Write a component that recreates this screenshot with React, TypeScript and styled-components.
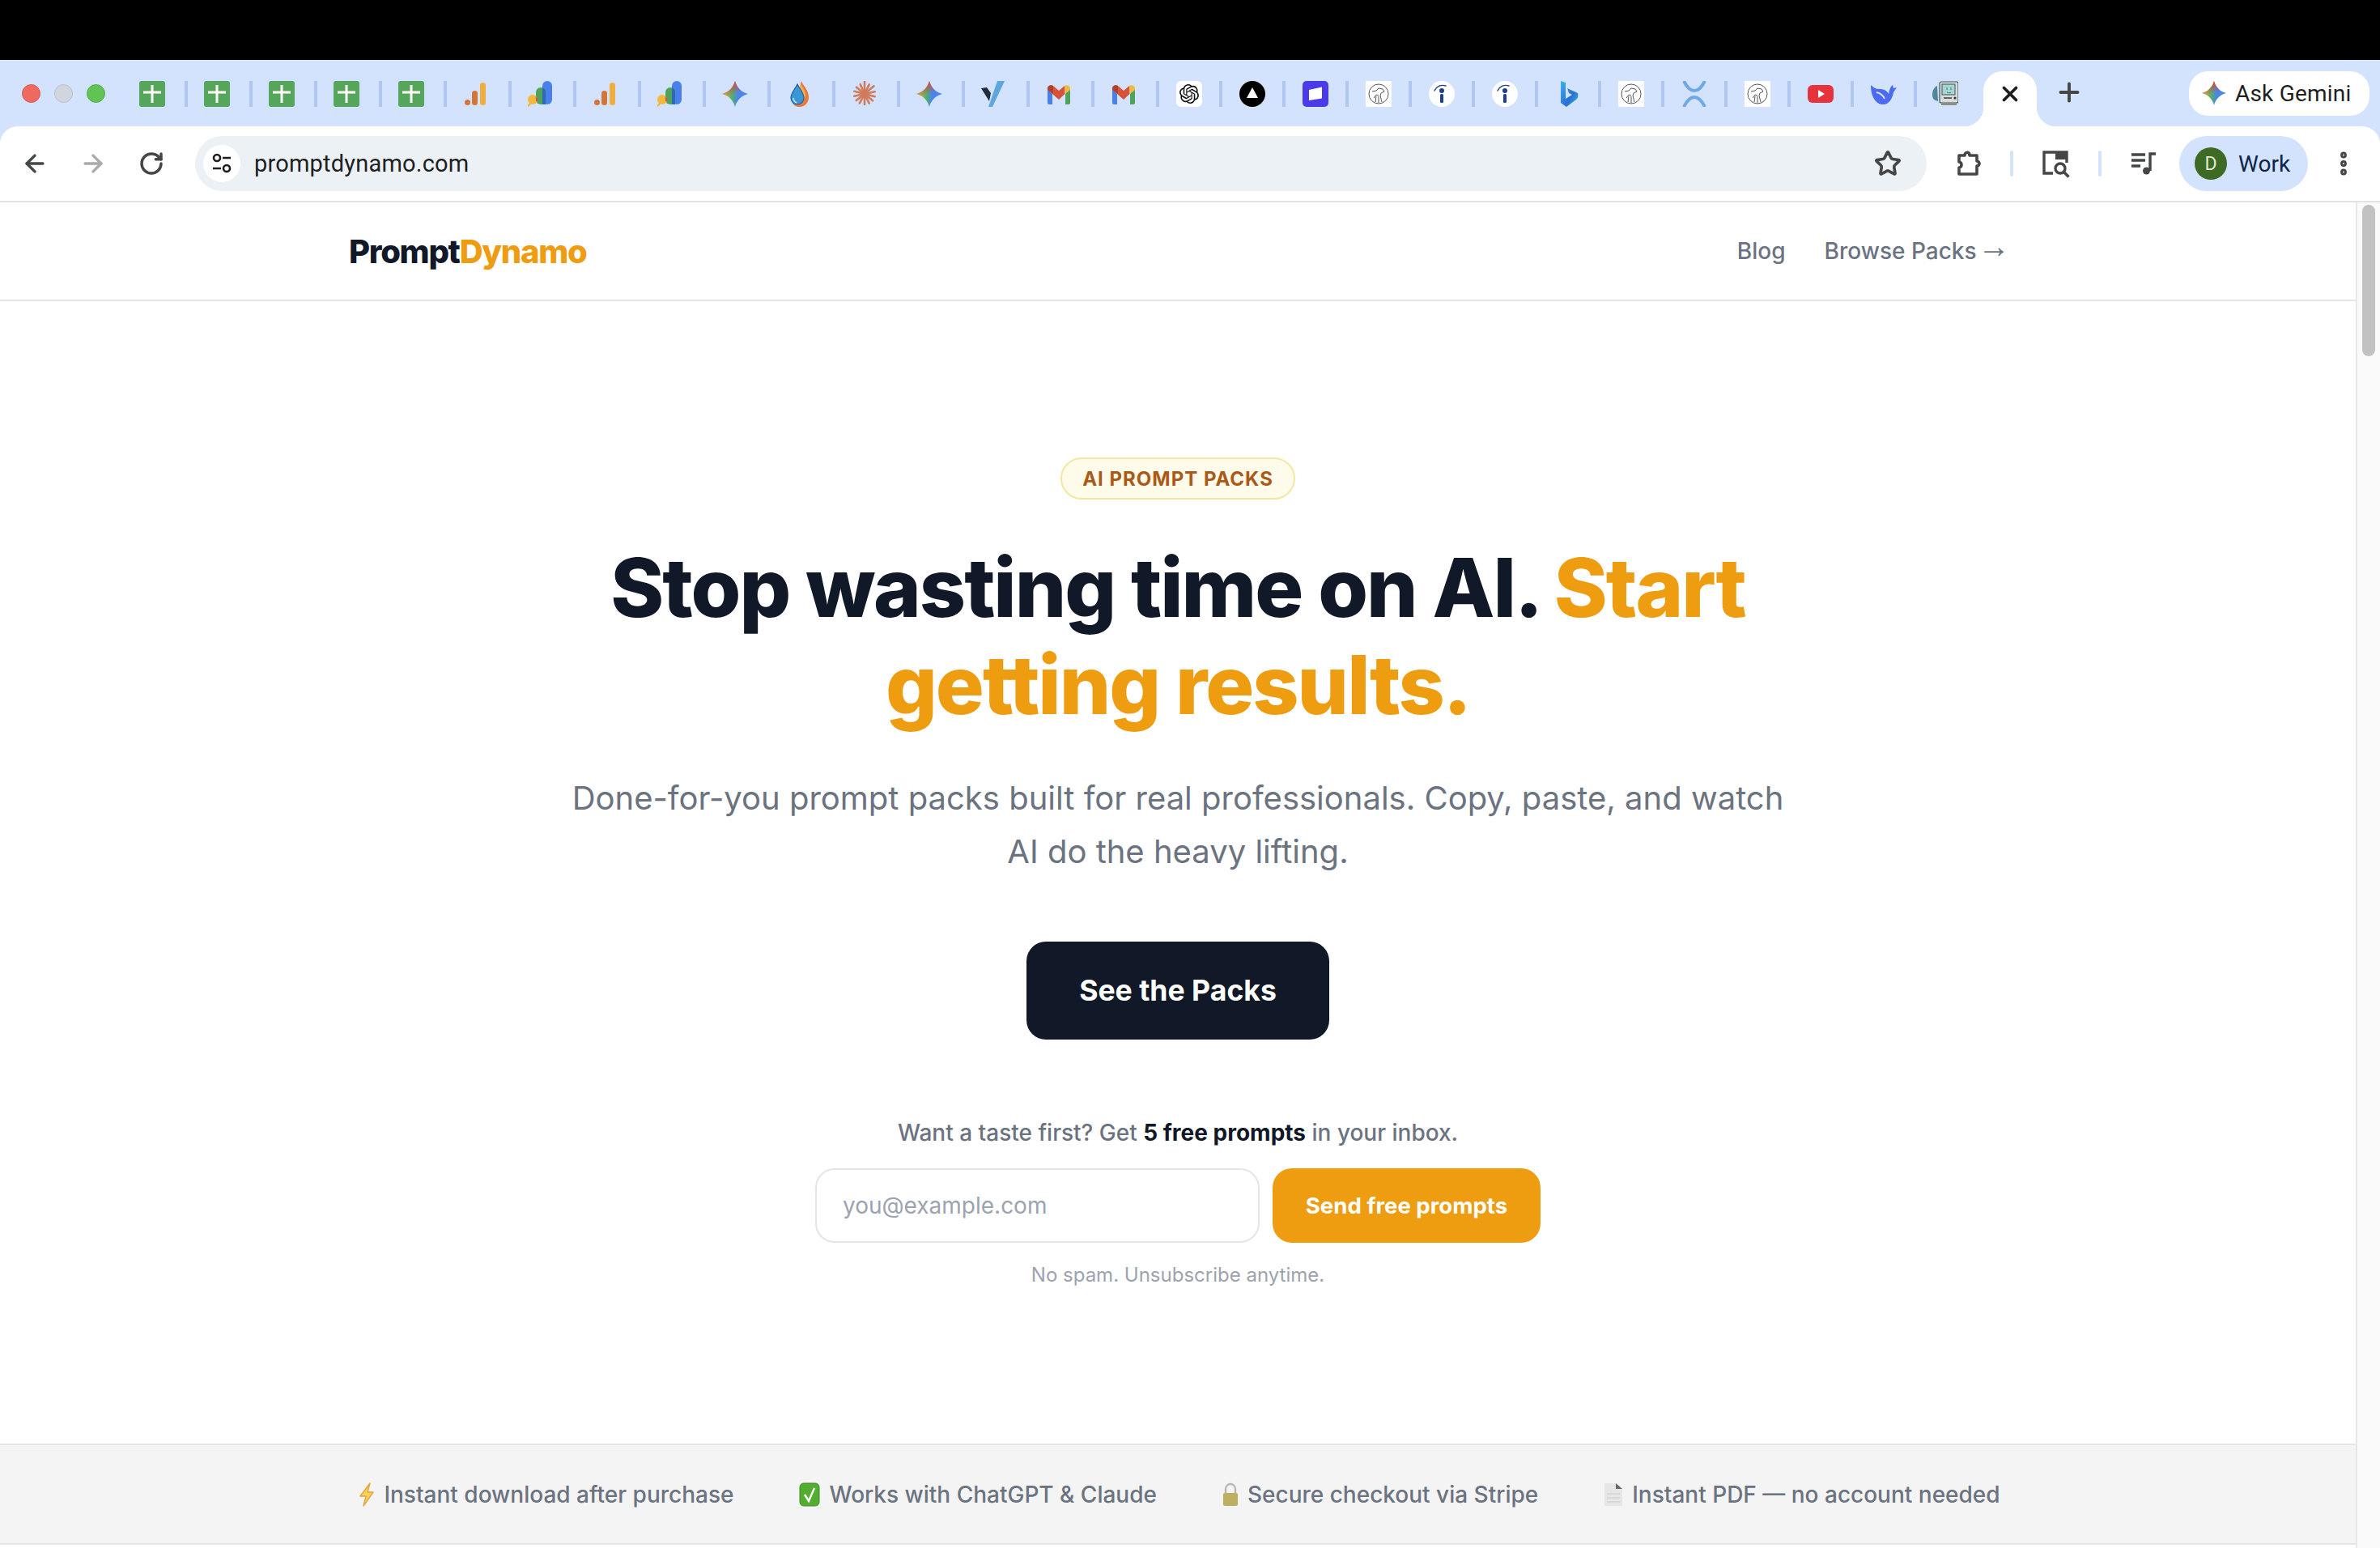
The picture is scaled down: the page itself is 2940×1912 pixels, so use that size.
import React from 'react';
import styled, { createGlobalStyle } from 'styled-components';
import { ArrowLeft, ArrowRight, RotateCw, Star, EllipsisVertical, X, Plus } from 'lucide-react';
import { SiOpenai } from 'react-icons/si';

const GlobalStyle = createGlobalStyle`
  html, body {
    margin: 0;
    padding: 0;
    background: #fff;
    overflow: hidden;
    font-family: Inter, "Liberation Sans", sans-serif;
  }
  * { box-sizing: border-box; }
`;

const Screen = styled.div`
  width: 2940px;
  height: 1912px;
  display: flex;
  flex-direction: column;
  overflow: hidden;
`;

const BlackBar = styled.div`
  height: 74px;
  background: #000;
  flex: none;
`;

const Chrome = styled.div`
  background: #d3e3fd;
  flex: none;
`;

const TabStrip = styled.div`
  height: 82px;
  display: flex;
  align-items: center;
  position: relative;
`;

const Lights = styled.div`
  width: 152px;
  flex: none;
  display: flex;
  gap: 17px;
  padding-left: 27px;
`;

const Light = styled.span<{ $c: string; $b: string }>`
  width: 23px;
  height: 23px;
  border-radius: 50%;
  background: ${(p) => p.$c};
  border: 1px solid ${(p) => p.$b};
`;

const Tab = styled.div<{ $w: number; $pad?: number; $last?: boolean }>`
  width: ${(p) => p.$w}px;
  height: 32px;
  flex: none;
  display: flex;
  justify-content: center;
  padding-right: ${(p) => p.$pad ?? 0}px;
  margin-top: 2px;
  border-right: ${(p) => (p.$last ? 'none' : '4px solid #afc6f1')};
  svg { display: block; width: 32px; height: 32px; }
`;

const ActiveTab = styled.div`
  width: 66px;
  height: 68px;
  flex: none;
  align-self: flex-end;
  background: #fff;
  border-radius: 24px 24px 0 0;
  position: relative;
  display: flex;
  align-items: flex-start;
  justify-content: center;
  padding-top: 13px;
  color: #1f1f1f;

  &::before, &::after {
    content: '';
    position: absolute;
    bottom: 0;
    width: 24px;
    height: 24px;
  }
  &::before {
    left: -24px;
    background: radial-gradient(circle at 0 0, transparent 24px, #fff 24.5px);
  }
  &::after {
    right: -24px;
    background: radial-gradient(circle at 100% 0, transparent 24px, #fff 24.5px);
  }
`;

const NewTab = styled.div`
  width: 80px;
  margin-top: -2px;
  display: flex;
  justify-content: center;
  color: #444746;
`;

const AskGemini = styled.div`
  margin-left: auto;
  margin-right: 13px;
  width: 223px;
  height: 55px;
  border-radius: 24px;
  background: #fff;
  display: flex;
  align-items: center;
  gap: 11px;
  padding-left: 16px;
  font-size: 28px;
  font-weight: 400;
  color: #1f1f1f;
  font-family: Roboto, Inter, sans-serif;
  letter-spacing: 0.2px;
  svg { width: 30px; height: 30px; flex: none; }
`;

const Toolbar = styled.div`
  height: 94px;
  background: #fff;
  border-radius: 22px 22px 0 0;
  border-bottom: 2px solid #e2e2e2;
  display: flex;
  align-items: center;
  padding: 0 0 0 7px;
`;

const ToolSlot = styled.div<{ $ml?: number; $faded?: boolean }>`
  width: 72px;
  flex: none;
  margin-left: ${(p) => p.$ml ?? 0}px;
  display: flex;
  justify-content: center;
  align-items: center;
  color: ${(p) => (p.$faded ? '#a9abad' : '#444746')};
`;

const Omnibox = styled.div`
  width: 2139px;
  height: 68px;
  flex: none;
  margin-left: 18px;
  background: #ecf1f6;
  border-radius: 34px;
  display: flex;
  align-items: center;
  padding: 0 31px 0 10px;
`;

const SiteButton = styled.div`
  width: 46px;
  height: 46px;
  border-radius: 50%;
  background: #fff;
  display: flex;
  align-items: center;
  justify-content: center;
  margin-right: 17px;
  flex: none;
`;

const Url = styled.span`
  font-family: Roboto, Inter, sans-serif;
  font-size: 29px;
  color: #1f1f1f;
  letter-spacing: 0.2px;
  flex: 1;
`;

const ToolSep = styled.span`
  width: 4px;
  height: 32px;
  flex: none;
  margin-left: 16px;
  background: #d3e3fd;
  border-radius: 2px;
`;

const ProfilePill = styled.div`
  width: 159px;
  height: 68px;
  flex: none;
  margin-left: 8px;
  border-radius: 34px;
  background: #d3e3fd;
  display: flex;
  align-items: center;
  padding-left: 19px;
  gap: 14px;
`;

const Avatar = styled.span`
  width: 40px;
  height: 40px;
  border-radius: 50%;
  background: #3d6b24;
  color: #dfe9d5;
  font-family: Roboto, sans-serif;
  font-size: 23px;
  display: flex;
  align-items: center;
  justify-content: center;
`;

const ProfileName = styled.span`
  font-family: Roboto, Inter, sans-serif;
  font-size: 28px;
  color: #0b2447;
`;

const Viewport = styled.div`
  flex: 1;
  min-height: 0;
  display: flex;
`;

const Scrollbar = styled.div`
  width: 30px;
  flex: none;
  background: #fafafa;
  border-left: 2px solid #e8e8e8;
  padding: 3px 0 0 6px;
`;

const ScrollThumb = styled.div`
  width: 16px;
  height: 187px;
  border-radius: 8px;
  background: #c2c2c2;
`;

const Page = styled.main`
  flex: 1;
  min-width: 0;
  display: flex;
  flex-direction: column;
  background: #fff;
`;

const SiteNav = styled.nav`
  height: 122px;
  flex: none;
  border-bottom: 2px solid #e5e5e5;
  display: flex;
  align-items: center;
  justify-content: space-between;
  padding: 0 431px;
`;

const Logo = styled.div`
  font-size: 40px;
  font-weight: 800;
  letter-spacing: -1.3px;
  color: #111827;
  span { color: #ee9c10; }
`;

const NavLinks = styled.div`
  display: flex;
  gap: 48px;
  font-size: 28px;
  font-weight: 500;
  color: #6b7280;
  white-space: nowrap;
`;

const NavArrow = styled.span`
  font-family: "Liberation Sans", sans-serif;
  font-size: 40px;
  line-height: 0;
  font-weight: 400;
  vertical-align: 2px;
  margin: 0 -4px 0 -6px;
`;

const Hero = styled.section`
  flex: 1;
  display: flex;
  flex-direction: column;
  align-items: center;
  padding-top: 193px;
  text-align: center;
`;

const Badge = styled.div`
  height: 52px;
  width: 290px;
  display: flex;
  align-items: center;
  justify-content: center;
  border: 2px solid #f2e7a3;
  border-radius: 26px;
  background: #fffbeb;
  color: #aa5a16;
  font-size: 24px;
  font-weight: 700;
  letter-spacing: 1px;
`;

const Headline = styled.h1`
  margin: 49px 0 0;
  max-width: 1600px;
  font-size: 100px;
  line-height: 120px;
  font-weight: 800;
  letter-spacing: -2px;
  color: #111827;
  span { color: #ee9c10; }
`;

const Lead = styled.p`
  margin: 47px 0 0;
  max-width: 1520px;
  font-size: 40px;
  line-height: 66px;
  font-weight: 400;
  color: #6b7280;
`;

const PrimaryCta = styled.button`
  margin-top: 78px;
  width: 374px;
  height: 121px;
  border: none;
  border-radius: 24px;
  background: #111827;
  color: #fff;
  font-family: inherit;
  font-size: 35.6px;
  font-weight: 700;
`;

const Taste = styled.p`
  margin: 97px 0 0;
  font-size: 28px;
  line-height: 36px;
  color: #6b7280;
  font-weight: 500;
  strong { color: #111827; font-weight: 700; }
`;

const SignupForm = styled.form`
  margin-top: 26px;
  display: flex;
  gap: 16px;
`;

const EmailInput = styled.input`
  width: 549px;
  height: 92px;
  border: 2px solid #e5e5e5;
  border-radius: 24px;
  background: #fff;
  padding: 0 32px;
  font-family: inherit;
  font-size: 28px;
  &::placeholder { color: #9ca3af; opacity: 1; }
`;

const SendButton = styled.button`
  width: 331px;
  height: 92px;
  border: none;
  border-radius: 24px;
  background: #ee9c10;
  color: #fff;
  font-family: inherit;
  font-size: 27.6px;
  font-weight: 700;
`;

const Fine = styled.p`
  margin: 24px 0 0;
  font-size: 24px;
  line-height: 32px;
  color: #9ca3af;
`;

const TrustBar = styled.div`
  height: 125px;
  flex: none;
  margin-bottom: 4px;
  padding-left: 4px;
  border-top: 2px solid #e5e5e5;
  border-bottom: 2px solid #e5e5e5;
  background: #f4f4f4;
  display: flex;
  align-items: center;
  justify-content: center;
  gap: 81px;
`;

const TrustItem = styled.div`
  display: flex;
  align-items: center;
  gap: 11px;
  font-size: 28px;
  font-weight: 500;
  color: #6b7280;
  svg { flex: none; }
`;

// favicons, all on a 32 box

const Sheets = () => (
  <svg viewBox="0 0 32 32">
    <rect width="32" height="32" rx="3" fill="#55a65b" />
    <path d="M14.5 5h3v7.500H27v3h-9.500V27h-3V15.500H5v-3h9.500z" fill="#fff" />
  </svg>
);

const Analytics = () => (
  <svg viewBox="0 0 32 32">
    <rect x="21" y="2" width="7" height="28" rx="3.5" fill="#eeae3c" />
    <rect x="11" y="12" width="7" height="18" rx="3.5" fill="#d5743a" />
    <circle cx="5.5" cy="26.5" r="3.5" fill="#d5743a" />
  </svg>
);

const Ads = () => (
  <svg viewBox="0 0 32 32">
    <rect x="18" y="0" width="12" height="29" rx="6" fill="#4a80ea" />
    <path d="M16 8a6 6 0 0 1 6 6v15h-6a6 6 0 0 1-6-6V14a6 6 0 0 1 6-6z" fill="#4ea35c" />
    <path d="M18 8.400a6 6 0 0 1 4 5.600v15h-4z" fill="#2f69b5" />
    <circle cx="6" cy="23" r="6" fill="#f2b93c" />
    <path d="M10 19a6 6 0 0 1 2 6l-2 0z" fill="#d8523a" />
    <path d="M4 27l-5 5" stroke="#f2b93c" strokeWidth="2.4" strokeLinecap="round" />
  </svg>
);

const sparkle = 'M16 0C18 8 24 14 32 16C24 18 18 24 16 32C14 24 8 18 0 16C8 14 14 8 16 0Z';

const GeminiStar = ({ id }: { id: string }) => (
  <svg viewBox="0 0 32 32">
    <defs>
      <linearGradient id={`${id}h`} x1="0" y1="0.5" x2="1" y2="0.5">
        <stop offset="0" stopColor="#f3b23a" />
        <stop offset="0.4" stopColor="#4fae6c" />
        <stop offset="0.6" stopColor="#4a86ea" />
        <stop offset="1" stopColor="#4a86ea" />
      </linearGradient>
      <linearGradient id={`${id}v`} x1="0.35" y1="0" x2="0.5" y2="0.5">
        <stop offset="0.2" stopColor="#d9483a" />
        <stop offset="1" stopColor="#d9483a" stopOpacity="0" />
      </linearGradient>
    </defs>
    <path d={sparkle} fill={`url(#${id}h)`} />
    <path d={sparkle} fill={`url(#${id}v)`} />
  </svg>
);

const Flame = () => (
  <svg viewBox="0 0 32 32">
    <path d="M18 0c2 6 9 11 9 20 0 7-5 12-11 12-4 0-8-2-9-5 6 1 10-6 9-14-.3-3 1-9 2-13z" fill="#e8793a" />
    <path d="M17 3c2 5 6 9 6 15 0 2-1 4-2 5-1-6-3-9-5-12 0-3 .5-6 1-8z" fill="#f2b04a" />
    <path d="M13 4c3 6 8 11 8 17a8 8 0 0 1-16 0c0-6 5-11 8-17z" fill="#3b97d3" stroke="#1d5fa5" strokeWidth="1.2" />
    <path d="M8 21c0 3 2 5 4 6" stroke="#bfe3f5" strokeWidth="1.6" fill="none" />
  </svg>
);

const Claude = () => (
  <svg viewBox="0 0 32 32" stroke="#d07b5c" strokeWidth="2.6" strokeLinecap="round">
    {[0, 26, 50, 78, 104, 130, 154, 180, 208, 232, 258, 284, 310, 336].map((a) => (
      <line key={a} x1="16" y1="16" x2="16" y2={a % 50 === 0 ? 1 : 3} transform={`rotate(${a} 16 16)`} />
    ))}
  </svg>
);

const Vee = () => (
  <svg viewBox="0 0 32 32">
    <path d="M17 0h9L11 32H6z" fill="#5fa6dd" transform="translate(3 0)" />
    <path d="M0 9l7-1 5 7-2 10z" fill="#1f2c3c" />
  </svg>
);

const Gmail = () => (
  <svg viewBox="0 0 32 32">
    <path d="M2 8v19a2 2 0 0 0 2 2h4V16z" fill="#4a80ea" />
    <path d="M30 8v19a2 2 0 0 1-2 2h-4V16z" fill="#4ea35c" />
    <path d="M2 9a4.500 4.500 0 0 1 7-3l7 6 7-6 .5 10L16 23 8 16 2 11z" fill="#d8523a" />
    <path d="M2 9a4.500 4.500 0 0 1 7-3v10L2 11z" fill="#b3402f" />
    <path d="M23 6a4.500 4.500 0 0 1 7 3v2l-6 5z" fill="#f2b93c" />
  </svg>
);

const OpenAi = () => (
  <svg viewBox="0 0 32 32">
    <rect width="32" height="32" rx="6" fill="#fff" />
    <SiOpenai x="4" y="4" width="24" height="24" color="#111" style={{ width: 24, height: 24 }} />
  </svg>
);

const Delta = () => (
  <svg viewBox="0 0 32 32">
    <circle cx="16" cy="16" r="16" fill="#000" />
    <path d="M16 8l7 13H9z" fill="#fff" />
  </svg>
);

const Purple = () => (
  <svg viewBox="0 0 32 32">
    <rect width="32" height="32" rx="5" fill="#4a3ae8" />
    <path d="M8 11l16-3.500v14L8 24z" fill="#fff" />
  </svg>
);

const Bird = () => (
  <svg viewBox="0 0 32 32">
    <rect width="32" height="32" fill="#fff" />
    <circle cx="16" cy="16" r="12" fill="none" stroke="#555" strokeWidth="1" />
    <path d="M8 13l5-1 3-3 5 1 2 3-4 2-1 3 2 8M10 21l3-4 3 1M12 26l1-7M16 27l0-8" fill="none" stroke="#555" strokeWidth="1" />
  </svg>
);

const Indeed = () => (
  <svg viewBox="0 0 32 32">
    <circle cx="16" cy="16" r="16" fill="#fff" />
    <path d="M7 12c2-5 8-8 14-6" fill="none" stroke="#1d3f8f" strokeWidth="1.4" strokeLinecap="round" />
    <circle cx="16" cy="12" r="3" fill="#1d3f8f" />
    <rect x="14" y="16" width="4" height="11" rx="1.6" fill="#1d3f8f" />
  </svg>
);

const Bing = () => (
  <svg viewBox="0 0 32 32">
    <defs>
      <linearGradient id="bingg" x1="0" y1="0" x2="1" y2="1">
        <stop offset="0" stopColor="#3db4e6" />
        <stop offset="0.6" stopColor="#2a6fd6" />
        <stop offset="1" stopColor="#36c3d6" />
      </linearGradient>
    </defs>
    <path d="M7 0l6 2v20l8-5-4-2-2-6 13 6c1 3 0 7-2 8L14 32l-7-5z" fill="url(#bingg)" />
  </svg>
);

const Ripple = () => (
  <svg viewBox="0 0 32 32" fill="none" stroke="#6ea7ea" strokeWidth="4">
    <path d="M3 0c3 6 7 12 13 12S26 6 29 0" />
    <path d="M3 32c3-6 7-12 13-12s10 6 13 12" />
  </svg>
);

const Youtube = () => (
  <svg viewBox="0 0 32 32">
    <rect y="5" width="32" height="22" rx="6" fill="#e5323d" />
    <path d="M13 11l8 5-8 5z" fill="#fff" />
  </svg>
);

const Whale = () => (
  <svg viewBox="0 0 32 32">
    <path d="M0 5c3 3 6 5 11 5 5 0 9 2 11 6 1-5 2-9 5-11l1 4 4-1-4 6c-1 7-5 15-13 15C6 29 0 19 0 5z" fill="#4c6bf0" />
    <path d="M7 14c4 1 8 3 10 8" fill="none" stroke="#d3e3fd" strokeWidth="2" />
  </svg>
);

const Mac = () => (
  <svg viewBox="0 0 32 32">
    <path d="M6 6C2 8 0 12 0 17c0 3 1 6 4 7l3 1z" fill="#4f8794" />
    <rect x="9" y="1" width="23" height="26" rx="2" fill="#d5dcd9" stroke="#44525a" strokeWidth="1.2" />
    <rect x="12" y="4" width="16" height="13" fill="#a8d4cf" stroke="#44525a" strokeWidth="1" />
    <path d="M18 8v3M23 8v3M18 14c2 1 4 1 5 0" stroke="#3c7f82" strokeWidth="1" fill="none" />
    <path d="M14 21h10" stroke="#333" strokeWidth="1.4" />
    <circle cx="28" cy="21" r="1.6" fill="#333" />
    <rect x="11" y="27" width="19" height="3" fill="#8d8f86" />
  </svg>
);

const tabs: { key: string; w: number; icon: React.ReactNode }[] = [
  ...[0, 1, 2, 3, 4].map((i) => ({ key: `s${i}`, w: 80, icon: <Sheets /> })),
  { key: 'an1', w: 80, icon: <Analytics /> },
  { key: 'ad1', w: 80, icon: <Ads /> },
  { key: 'an2', w: 80, icon: <Analytics /> },
  { key: 'ad2', w: 80, icon: <Ads /> },
  { key: 'ge1', w: 80, icon: <GeminiStar id="ge1" /> },
  { key: 'fl', w: 80, icon: <Flame /> },
  { key: 'cl', w: 80, icon: <Claude /> },
  { key: 'ge2', w: 80, icon: <GeminiStar id="ge2" /> },
  { key: 'v', w: 80, icon: <Vee /> },
  { key: 'gm1', w: 80, icon: <Gmail /> },
  { key: 'gm2', w: 80, icon: <Gmail /> },
  { key: 'oa', w: 78, icon: <OpenAi /> },
  { key: 'de', w: 78, icon: <Delta /> },
  { key: 'pu', w: 78, icon: <Purple /> },
  { key: 'b1', w: 78, icon: <Bird /> },
  { key: 'in1', w: 78, icon: <Indeed /> },
  { key: 'in2', w: 78, icon: <Indeed /> },
  { key: 'bi', w: 78, icon: <Bing /> },
  { key: 'b2', w: 78, icon: <Bird /> },
  { key: 'ri', w: 78, icon: <Ripple /> },
  { key: 'b3', w: 78, icon: <Bird /> },
  { key: 'yt', w: 78, icon: <Youtube /> },
  { key: 'wh', w: 78, icon: <Whale /> },
];

const SiteIcon = () => (
  <svg width="28" height="28" viewBox="0 0 28 28" fill="none" stroke="#1f1f1f" strokeWidth="2.6">
    <circle cx="8" cy="7" r="4" />
    <path d="M15 7h10M3 20h10" />
    <circle cx="20" cy="20" r="4" />
  </svg>
);

const ExtensionIcon = () => (
  <svg width="36" height="36" viewBox="0 0 36 36" fill="none" stroke="#444746" strokeWidth="3.6" strokeLinejoin="round">
    <path d="M7 8h7c0-5 6-5 6 0h9v7c4 0 4 6 0 6v10H7v-8c4 0 4-7 0-7z" />
  </svg>
);

const SidePanelIcon = () => (
  <svg width="38" height="38" viewBox="0 0 38 38" fill="none" stroke="#444746" strokeWidth="3.4">
    <path d="M15 31H4V5h28v13" />
    <rect x="18" y="4" width="15" height="10" fill="#444746" stroke="none" />
    <circle cx="24" cy="25" r="6" />
    <path d="M28.5 29.5l6 6" strokeWidth="3.6" />
  </svg>
);

const MediaIcon = () => (
  <svg width="34" height="34" viewBox="0 0 34 34" fill="none" stroke="#444746" strokeWidth="3.4">
    <path d="M2 6h17M2 13h17M2 20h11" />
    <path d="M25 26V5h7" />
    <circle cx="20.5" cy="26" r="4.5" fill="#444746" stroke="none" />
  </svg>
);

const Bolt = () => (
  <svg width="20" height="30" viewBox="0 0 20 30">
    <path d="M14 1L2 17h7L6 29l12-17h-7z" fill="#f8d35e" stroke="#e8a33a" strokeWidth="1.4" strokeLinejoin="round" />
  </svg>
);

const CheckBox = () => (
  <svg width="26" height="30" viewBox="0 0 26 30">
    <rect x="1" y="1" width="24" height="28" rx="5" fill="#54ad33" stroke="#3d8a24" />
    <path d="M7 15l5 8 7-16" fill="none" stroke="#fff" strokeWidth="2.4" />
  </svg>
);

const Lock = () => (
  <svg width="20" height="30" viewBox="0 0 20 30">
    <path d="M4 14V8a6 6 0 0 1 12 0v6" fill="none" stroke="#b8b8b8" strokeWidth="2.4" />
    <rect x="1" y="13" width="18" height="16" rx="2" fill="#bdb060" />
  </svg>
);

const DocIcon = () => (
  <svg width="24" height="30" viewBox="0 0 24 30">
    <path d="M1 1h14l8 7v21H1z" fill="#e6e6e6" />
    <path d="M15 1l8 7h-8z" fill="#666" />
    <path d="M4 14h16M4 19h16M4 24h16" stroke="#d3d3d3" strokeWidth="1.4" />
  </svg>
);

const App = () => {
  return (
    <Screen>
      <GlobalStyle />
      <BlackBar />
      <Chrome>
        <TabStrip>
          <Lights>
            <Light $c="#ee6a5f" $b="#d9574d" />
            <Light $c="#cfd6df" $b="#b9c0c9" />
            <Light $c="#5fc454" $b="#4fae45" />
          </Lights>
          {tabs.map((t) => (
            <Tab key={t.key} $w={t.w} $pad={t.w === 80 ? 4 : 0}>
              {t.icon}
            </Tab>
          ))}
          <Tab $w={82} $pad={12} $last>
            <Mac />
          </Tab>
          <ActiveTab>
            <X size={30} strokeWidth={3} />
          </ActiveTab>
          <NewTab>
            <Plus size={36} strokeWidth={2.6} />
          </NewTab>
          <AskGemini>
            <GeminiStar id="ask" />
            Ask Gemini
          </AskGemini>
        </TabStrip>
        <Toolbar>
          <ToolSlot><ArrowLeft size={34} strokeWidth={2.4} /></ToolSlot>
          <ToolSlot $faded><ArrowRight size={34} strokeWidth={2.4} /></ToolSlot>
          <ToolSlot><RotateCw size={32} strokeWidth={2.6} /></ToolSlot>
          <Omnibox>
            <SiteButton><SiteIcon /></SiteButton>
            <Url>promptdynamo.com</Url>
            <Star size={34} strokeWidth={2.6} color="#444746" />
          </Omnibox>
          <ToolSlot $ml={15}><ExtensionIcon /></ToolSlot>
          <ToolSep />
          <ToolSlot $ml={17}><SidePanelIcon /></ToolSlot>
          <ToolSep />
          <ToolSlot $ml={16}><MediaIcon /></ToolSlot>
          <ProfilePill>
            <Avatar>D</Avatar>
            <ProfileName>Work</ProfileName>
          </ProfilePill>
          <ToolSlot $ml={8}><EllipsisVertical size={36} strokeWidth={3.2} color="#444746" /></ToolSlot>
        </Toolbar>
      </Chrome>
      <Viewport>
        <Page>
          <SiteNav>
            <Logo>Prompt<span>Dynamo</span></Logo>
            <NavLinks>
              <span>Blog</span>
              <span>Browse Packs <NavArrow>→</NavArrow></span>
            </NavLinks>
          </SiteNav>
          <Hero>
            <Badge>AI PROMPT PACKS</Badge>
            <Headline>
              Stop wasting time on AI. <span>Start getting results.</span>
            </Headline>
            <Lead>Done-for-you prompt packs built for real professionals. Copy, paste, and watch AI do the heavy lifting.</Lead>
            <PrimaryCta>See the Packs</PrimaryCta>
            <Taste>Want a taste first? Get <strong>5 free prompts</strong> in your inbox.</Taste>
            <SignupForm>
              <EmailInput placeholder="you@example.com" />
              <SendButton type="button">Send free prompts</SendButton>
            </SignupForm>
            <Fine>No spam. Unsubscribe anytime.</Fine>
          </Hero>
          <TrustBar>
            <TrustItem><Bolt />Instant download after purchase</TrustItem>
            <TrustItem><CheckBox />Works with ChatGPT &amp; Claude</TrustItem>
            <TrustItem><Lock />Secure checkout via Stripe</TrustItem>
            <TrustItem><DocIcon />Instant PDF — no account needed</TrustItem>
          </TrustBar>
        </Page>
        <Scrollbar><ScrollThumb /></Scrollbar>
      </Viewport>
    </Screen>
  );
};

export default App;
